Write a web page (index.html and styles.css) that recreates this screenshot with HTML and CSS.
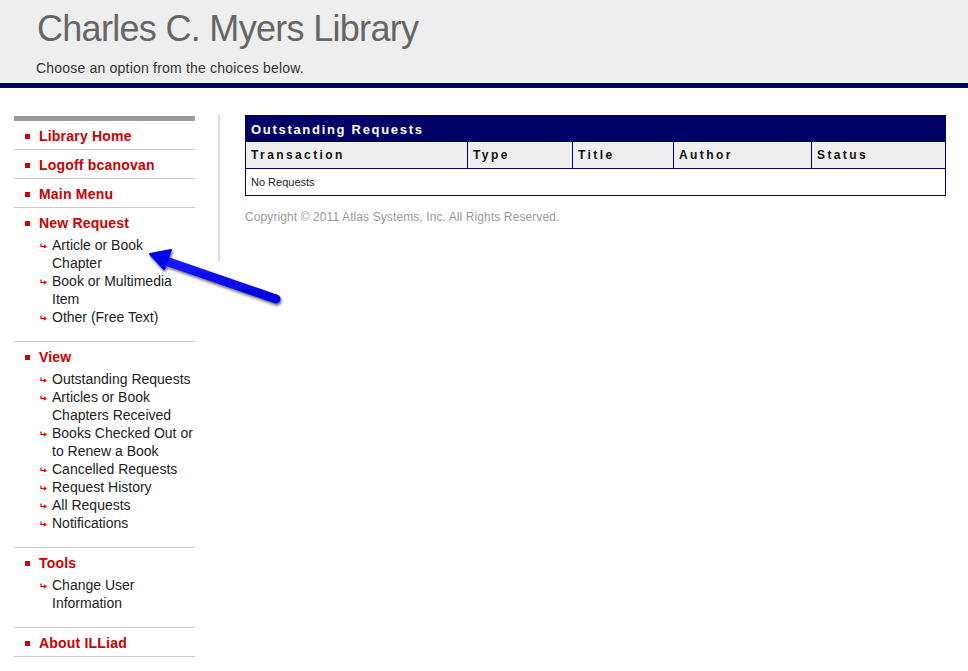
FILE: index.html
```html
<!DOCTYPE html>
<html>
<head>
<meta charset="utf-8">
<title>Charles C. Myers Library</title>
<link rel="stylesheet" href="styles.css">
</head>
<body>
<header class="header">
  <h1 class="site-title">Charles C. Myers Library</h1>
  <p class="site-sub">Choose an option from the choices below.</p>
</header>
<div class="main">
  <nav class="sidebar">
    <ul class="menu">
      <li class="menu-item"><span class="sq"></span><a class="menu-link">Library Home</a></li>
      <li class="menu-item"><span class="sq"></span><a class="menu-link">Logoff bcanovan</a></li>
      <li class="menu-item"><span class="sq"></span><a class="menu-link">Main Menu</a></li>
      <li class="menu-item group">
        <div class="group-head"><span class="sq"></span><a class="menu-link">New Request</a></div>
        <ul class="sub">
          <li class="sub-item"><svg class="arr" viewBox="0 0 7 6"><path d="M1 0.5V3.5H5.5M4 2L5.8 3.5L4 5" fill="none" stroke="#d00" stroke-width="1.2"/></svg><span>Article or Book Chapter</span></li>
          <li class="sub-item"><svg class="arr" viewBox="0 0 7 6"><path d="M1 0.5V3.5H5.5M4 2L5.8 3.5L4 5" fill="none" stroke="#d00" stroke-width="1.2"/></svg><span>Book or Multimedia Item</span></li>
          <li class="sub-item"><svg class="arr" viewBox="0 0 7 6"><path d="M1 0.5V3.5H5.5M4 2L5.8 3.5L4 5" fill="none" stroke="#d00" stroke-width="1.2"/></svg><span>Other (Free Text)</span></li>
        </ul>
      </li>
      <li class="menu-item group">
        <div class="group-head"><span class="sq"></span><a class="menu-link">View</a></div>
        <ul class="sub">
          <li class="sub-item"><svg class="arr" viewBox="0 0 7 6"><path d="M1 0.5V3.5H5.5M4 2L5.8 3.5L4 5" fill="none" stroke="#d00" stroke-width="1.2"/></svg><span>Outstanding Requests</span></li>
          <li class="sub-item"><svg class="arr" viewBox="0 0 7 6"><path d="M1 0.5V3.5H5.5M4 2L5.8 3.5L4 5" fill="none" stroke="#d00" stroke-width="1.2"/></svg><span>Articles or Book Chapters Received</span></li>
          <li class="sub-item"><svg class="arr" viewBox="0 0 7 6"><path d="M1 0.5V3.5H5.5M4 2L5.8 3.5L4 5" fill="none" stroke="#d00" stroke-width="1.2"/></svg><span>Books Checked Out or to Renew a Book</span></li>
          <li class="sub-item"><svg class="arr" viewBox="0 0 7 6"><path d="M1 0.5V3.5H5.5M4 2L5.8 3.5L4 5" fill="none" stroke="#d00" stroke-width="1.2"/></svg><span>Cancelled Requests</span></li>
          <li class="sub-item"><svg class="arr" viewBox="0 0 7 6"><path d="M1 0.5V3.5H5.5M4 2L5.8 3.5L4 5" fill="none" stroke="#d00" stroke-width="1.2"/></svg><span>Request History</span></li>
          <li class="sub-item"><svg class="arr" viewBox="0 0 7 6"><path d="M1 0.5V3.5H5.5M4 2L5.8 3.5L4 5" fill="none" stroke="#d00" stroke-width="1.2"/></svg><span>All Requests</span></li>
          <li class="sub-item"><svg class="arr" viewBox="0 0 7 6"><path d="M1 0.5V3.5H5.5M4 2L5.8 3.5L4 5" fill="none" stroke="#d00" stroke-width="1.2"/></svg><span>Notifications</span></li>
        </ul>
      </li>
      <li class="menu-item group">
        <div class="group-head"><span class="sq"></span><a class="menu-link">Tools</a></div>
        <ul class="sub">
          <li class="sub-item"><svg class="arr" viewBox="0 0 7 6"><path d="M1 0.5V3.5H5.5M4 2L5.8 3.5L4 5" fill="none" stroke="#d00" stroke-width="1.2"/></svg><span>Change User Information</span></li>
        </ul>
      </li>
      <li class="menu-item"><span class="sq"></span><a class="menu-link">About ILLiad</a></li>
    </ul>
  </nav>
  <section class="content">
    <table class="req-table">
      <tr class="caption-row"><th colspan="5">Outstanding Requests</th></tr>
      <tr class="head-row">
        <th class="c1">Transaction</th>
        <th class="c2">Type</th>
        <th class="c3">Title</th>
        <th class="c4">Author</th>
        <th class="c5">Status</th>
      </tr>
      <tr class="body-row"><td colspan="5">No Requests</td></tr>
    </table>
    <p class="copyright">Copyright © 2011 Atlas Systems, Inc. All Rights Reserved.</p>
  </section>
</div>
<svg class="annot" width="968" height="671" viewBox="0 0 968 671">
  <defs>
    <filter id="sh" x="-20%" y="-20%" width="140%" height="140%">
      <feGaussianBlur in="SourceAlpha" stdDeviation="1.5"/>
      <feOffset dx="1" dy="2" result="b"/>
      <feComponentTransfer><feFuncA type="linear" slope="0.6"/></feComponentTransfer>
      <feMerge><feMergeNode/><feMergeNode in="SourceGraphic"/></feMerge>
    </filter>
    <linearGradient id="bg" x1="0" y1="0" x2="0" y2="1">
      <stop offset="0" stop-color="#1a1aff"/>
      <stop offset="1" stop-color="#0000dd"/>
    </linearGradient>
  </defs>
  <g filter="url(#sh)">
    <line x1="163" y1="260" x2="276" y2="299" stroke="url(#bg)" stroke-width="9" stroke-linecap="round"/>
    <path d="M150 254 L171 250 L164 269 Z" fill="#0000ee" stroke="#0000ee" stroke-width="2" stroke-linejoin="round"/>
  </g>
</svg>
</body>
</html>
```
FILE: styles.css
```css
* { box-sizing: border-box; }
html, body { margin: 0; padding: 0; background: #fff; }
body { font-family: "Liberation Sans", Arial, sans-serif; color: #222; position: relative; width: 968px; height: 671px; overflow: hidden; }

.header {
  background: #eeeeee;
  height: 88px;
  border-bottom: 5px solid #000066;
  padding-left: 37px;
  padding-top: 7px;
}
.site-title {
  margin: 0;
  font-weight: normal;
  font-size: 36px;
  line-height: 44px;
  color: #666666;
  letter-spacing: -0.7px;
}
.site-sub {
  margin: 8px 0 0 -1px;
  font-size: 14px;
  line-height: 18px;
  color: #333;
  letter-spacing: 0.2px;
}

.main {
  display: flex;
  align-items: flex-start;
  padding-top: 27px;
}

.sidebar {
  width: 181px;
  margin-left: 14px;
  margin-top: 1px;
  border-top: 5px solid #999999;
}
.menu, .sub { list-style: none; margin: 0; padding: 0; }
.menu-item {
  display: flex;
  align-items: center;
  height: 29px;
  border-bottom: 1px solid #cccccc;
  padding-top: 2px;
}
.menu-item.group {
  display: block;
  height: auto;
  padding: 6px 0 15px;
}
.group-head { display: flex; align-items: center; height: 18px; }
.sq {
  width: 5px;
  height: 5px;
  background: #cc0000;
  margin-left: 11px;
  margin-right: 9px;
  flex: none;
}
.menu-link {
  color: #cc0000;
  font-weight: bold;
  font-size: 14px;
  line-height: 18px;
  letter-spacing: 0.2px;
}
.sub { margin-top: 4px; padding-left: 26px; }
.sub-item {
  display: flex;
  align-items: flex-start;
  font-size: 14px;
  line-height: 18px;
  color: #222;
}
.arr { width: 7px; height: 6px; flex: none; margin-top: 7px; margin-right: 5px; }
.sub-item span { width: 148px; }

.content {
  margin-left: 23px;
  border-left: 2px solid #dddddd;
  padding-left: 25px;
  padding-bottom: 36px;
}
.req-table {
  width: 701px;
  border-collapse: collapse;
  border: 1px solid #000066;
}
.caption-row th {
  background: #000066;
  color: #fff;
  text-align: left;
  font-size: 13px;
  font-weight: bold;
  letter-spacing: 1.7px;
  height: 26px;
  padding: 1px 5px 0;
}
.head-row th {
  background: #eeeeee;
  color: #111;
  text-align: left;
  font-size: 12px;
  font-weight: bold;
  letter-spacing: 2.4px;
  height: 27px;
  padding: 0 5px;
  border-left: 1px solid #000066;
  border-bottom: 1px solid #000066;
}
.head-row th.c1 { width: 222px; border-left: none; }
.head-row th.c2 { width: 105px; }
.head-row th.c3 { width: 101px; }
.head-row th.c4 { width: 138px; }
.body-row td {
  font-size: 11px;
  height: 27px;
  padding: 0 5px;
  color: #222;
}
.copyright {
  margin: 13px 0 0;
  font-size: 12px;
  line-height: 16px;
  color: #999999;
  letter-spacing: 0.1px;
}

.annot { position: absolute; left: 0; top: 0; pointer-events: none; }
```
